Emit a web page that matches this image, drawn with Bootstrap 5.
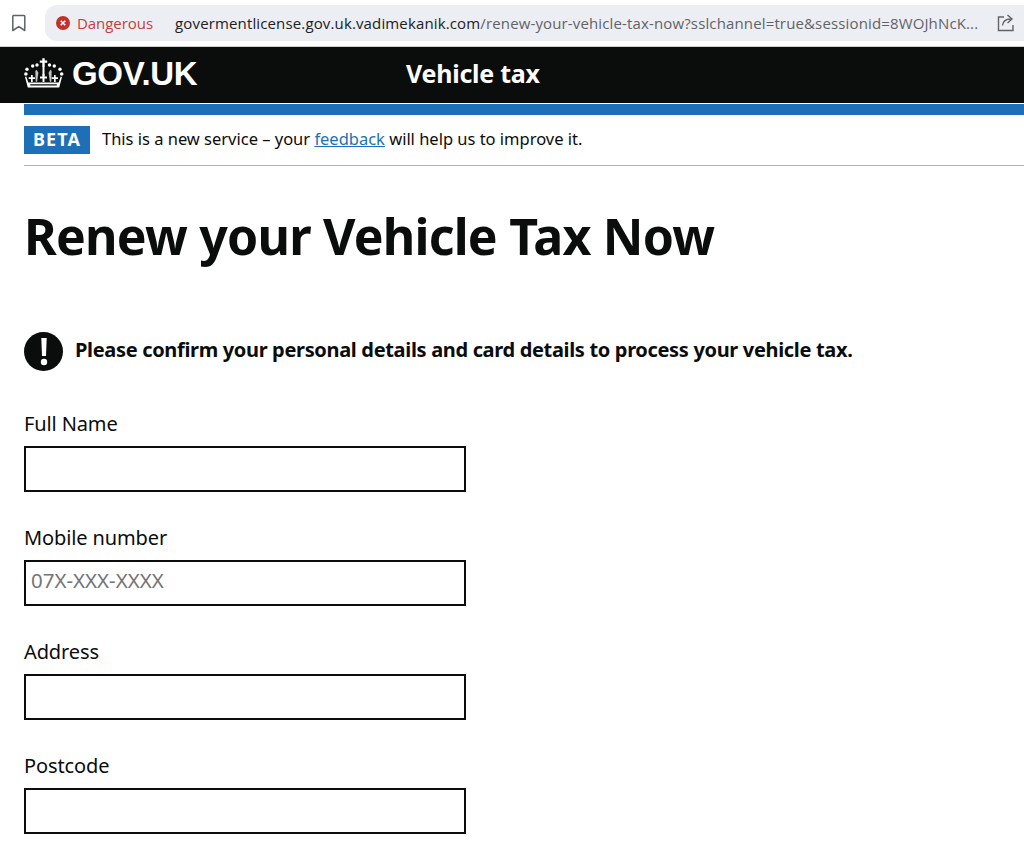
<!DOCTYPE html>
<html lang="en">
<head>
<meta charset="utf-8">
<title>Renew your Vehicle Tax Now</title>
<link rel="stylesheet" href="https://cdn.jsdelivr.net/npm/bootstrap@5.3.0/dist/css/bootstrap.min.css">
<style>
html,body{height:858px;overflow:hidden;background:#fff}
body{font-family:"Noto Sans","Liberation Sans",sans-serif;color:#0b0c0c}
.chrome-bar{height:47px;background:#fff;border-bottom:1px solid #d0d0d0;padding:5px 0 5px 10px;gap:17px}
.chrome-ico{width:18px;height:20px;flex:none}
.chrome-pill{height:36px;flex:1;background:#edeef3;border-radius:12px 0 0 12px;padding-left:11px;font-family:"Open Sans","Liberation Sans",sans-serif;font-size:15px;white-space:nowrap;overflow:hidden;color:#5f6368}
.danger-txt{color:#c5403a;margin:0 22px 0 7px;letter-spacing:-.05px}
.url-host{color:#202124}
.url-box{letter-spacing:.14px;width:816px;flex:none}
.share-ico{margin-left:5px;flex:none}
.gov-head{height:56px;background:#0b0c0c;color:#fff;padding:0 0 3px 24px}
.gov-logo{font-family:"Liberation Sans",sans-serif;font-weight:700;font-size:33px;width:382px;letter-spacing:-.3px;gap:7px}
.gov-service{font-size:25px;font-weight:700;letter-spacing:-.25px}
.page-wrap{padding:0 0 0 24px}
.blue-rule{height:11px;background:#1d70b8;margin-top:1px}
.beta-row{height:51px;border-bottom:1px solid #b1b4b6;gap:12px;font-size:16.5px;letter-spacing:-.01px}
.beta-msg{margin-bottom:2px}
.beta-tag{width:66px;height:28px;background:#1d70b8;color:#fff;font-weight:700;font-size:18px;letter-spacing:1.1px;padding-bottom:2px}
.beta-row a{color:#1d70b8}
.main-title{font-size:50px;font-weight:700;letter-spacing:-.77px;line-height:60px;margin:40px 0 0;}
.warn-row{margin-top:66px;gap:12px;height:39px}
.warn-ico{width:39px;height:39px;flex:none;border-radius:50%;background:#0b0c0c;color:#fff}
.warn-txt{font-size:20px;font-weight:700;letter-spacing:-.33px;margin-bottom:3px}
.form-area{margin-top:39px}
.field-group{margin-bottom:32px}
.field-lab{font-size:20px;line-height:28px;margin-bottom:8px;letter-spacing:-.12px;display:block}
.field-inp{display:block;width:442px;height:46px;border:2px solid #0b0c0c;border-radius:0;padding:2px 5px 8px;font-size:20.5px;font-family:inherit;background:#fff;outline:0}
.field-inp::placeholder{color:#757575;opacity:1}
</style>
</head>
<body>
<div class="chrome-bar d-flex align-items-center">
  <svg class="chrome-ico" viewBox="0 0 18 20"><path d="M3.500 2.500h10.500a.8.8 0 0 1 .8.8V17.500L8.800 13.600 2.800 17.500V3.300a.8.8 0 0 1 .7-.8z" fill="none" stroke="#5f6368" stroke-width="1.500" stroke-linejoin="round"/></svg>
  <div class="chrome-pill d-flex align-items-center">
    <svg width="14" height="14" viewBox="0 0 13 13" class="flex-shrink-0"><circle cx="6.500" cy="6.500" r="6.500" fill="#c5302a"/><path d="M4.400 4.400l4.200 4.200M8.600 4.400l-4.200 4.200" stroke="#fff" stroke-width="1.500"/></svg>
    <span class="danger-txt">Dangerous</span>
    <span class="url-box"><span class="url-host">govermentlicense.gov.uk.vadimekanik.com</span>/renew-your-vehicle-tax-now?sslchannel=true&amp;sessionid=8WOJhNcK...</span>
    <svg class="share-ico" width="20" height="20" viewBox="0 0 20 20"><path d="M8 4H2.500v13.500H17V12M6.500 12.500c.5-4 3.500-6.500 8-6.500M11.500 2l4.500 4-4.500 4" fill="none" stroke="#5f6368" stroke-width="1.400"/></svg>
  </div>
</div>
<header class="gov-head d-flex align-items-center">
  <div class="gov-logo d-flex align-items-center">
    <svg width="41" height="31" viewBox="0 0 41 31" fill="#fff" class="flex-shrink-0">
      <path d="M18.300.3h2.400v2.200h2.500v2.300h-2.500V9h-2.400V4.800h-2.500V2.500h2.500z"/>
      <circle cx="8.700" cy="8" r="1.700"/><circle cx="13" cy="7" r="1.700"/><circle cx="25.500" cy="7" r="1.700"/><circle cx="30.300" cy="8" r="1.700"/><circle cx="3" cy="11.300" r="1.700"/><circle cx="36" cy="11.300" r="1.700"/><circle cx="1.900" cy="16" r="1.800"/><circle cx="37.700" cy="16" r="1.800"/>
      <rect x="18.500" y="9" width="2" height="9"/>
      <path d="M7 17h1.700v2.300H11V21H8.700v3H7v-3H4.700v-1.700H7zM18.500 16h2v2.600H23v1.800h-2.500V24h-2v-3.600H16v-1.800h2.500zM30 17h1.700v2.300H34V21h-2.300v3H30v-3h-2.300v-1.700H30z"/>
      <path d="M11.300 13l1.300-1.300 1.800 3-1.300 9h-1.400zM27.700 13l-1.300-1.300-1.800 3 1.300 9h1.400z" opacity=".75"/>
      <path d="M2.300 18.500l2 6H34.700l2-6 1.300.6-2.800 10.400H3.800L1 19.100zM6.200 26.200v1.400h26.600v-1.400z" fill-rule="evenodd"/>
    </svg>
    <span>GOV.UK</span>
  </div>
  <div class="gov-service">Vehicle tax</div>
</header>
<main class="page-wrap">
  <div class="blue-rule"></div>
  <div class="beta-row d-flex align-items-center">
    <strong class="beta-tag d-flex align-items-center justify-content-center">BETA</strong>
    <span class="beta-msg">This is a new service – your <a href="#">feedback</a> will help us to improve it.</span>
  </div>
  <h1 class="main-title">Renew your Vehicle Tax Now</h1>
  <div class="warn-row d-flex align-items-center">
    <div class="warn-ico d-flex align-items-center justify-content-center">
      <svg width="10" height="30" viewBox="0 0 10 30" fill="#fff"><path d="M2.300 1h5.400l-.7 18H3z"/><circle cx="5" cy="25" r="3.200"/></svg>
    </div>
    <strong class="warn-txt">Please confirm your personal details and card details to process your vehicle tax.</strong>
  </div>
  <form class="form-area">
    <div class="field-group"><label class="field-lab" for="a">Full Name</label><input class="field-inp" id="a" type="text"></div>
    <div class="field-group"><label class="field-lab" for="b">Mobile number</label><input class="field-inp" id="b" type="text" placeholder="07X-XXX-XXXX"></div>
    <div class="field-group"><label class="field-lab" for="c">Address</label><input class="field-inp" id="c" type="text"></div>
    <div class="field-group"><label class="field-lab" for="d">Postcode</label><input class="field-inp" id="d" type="text"></div>
  </form>
</main>
<script src="https://cdn.jsdelivr.net/npm/bootstrap@5.3.0/dist/js/bootstrap.bundle.min.js"></script>
</body>
</html>
